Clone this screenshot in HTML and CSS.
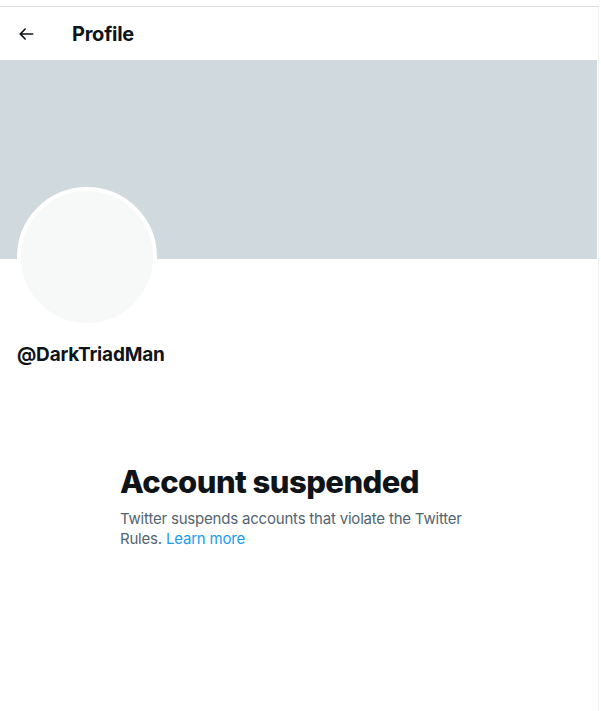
FILE: index.html
```html
<!DOCTYPE html>
<html lang="en">
<head>
<meta charset="utf-8">
<title>Profile</title>
<link rel="stylesheet" href="styles.css">
</head>
<body>
<div class="page">
  <main class="column">
    <header class="topbar">
      <span class="back">
        <svg viewBox="0 0 24 24" width="20" height="20" aria-hidden="true"><path d="M20 11H7.414l4.293-4.293c.39-.39.39-1.023 0-1.414s-1.023-.39-1.414 0l-6 6c-.39.39-.39 1.023 0 1.414l6 6c.195.195.45.293.707.293s.512-.098.707-.293c.39-.39.39-1.023 0-1.414L7.414 13H20c.553 0 1-.447 1-1s-.447-1-1-1z"/></svg>
      </span>
      <h1 class="title">Profile</h1>
    </header>
    <div class="banner"></div>
    <div class="profile">
      <div class="avatar"></div>
      <div class="handle">@DarkTriadMan</div>
    </div>
    <section class="empty">
      <h2 class="empty-title">Account suspended</h2>
      <p class="empty-text"><span>Twitter suspends accounts that violate the Twitter Rules.</span> <a href="#" class="link">Learn more</a></p>
    </section>
  </main>
</div>
</body>
</html>
```

FILE: styles.css
```css
* { box-sizing: border-box; }
html, body { margin: 0; padding: 0; background: #fff; }
body {
  font-family: Inter, "Noto Sans", "Liberation Sans", sans-serif;
  color: #0f1419;
}
.page {
  padding-top: 6px;
}
.column {
  width: 599px;
  min-height: 705px;
  border-top: 1px solid #dcdfe1;
  border-right: 1px solid #eff3f4;
}
.topbar {
  height: 53px;
  display: flex;
  align-items: center;
  padding-left: 16px;
}
.back {
  width: 20px;
  height: 20px;
  display: flex;
}
.back svg { fill: #0f1419; }
.title {
  margin: 0 0 0 36px;
  font-size: 20px;
  font-weight: 700;
  line-height: 24px;
  letter-spacing: -0.25px;
}
.banner {
  height: 199px;
  background: #cfd9de;
  margin-right: 1px;
}
.profile {
  padding-left: 17px;
}
.avatar {
  width: 140px;
  height: 140px;
  margin-top: -72px;
  border-radius: 50%;
  border: 4px solid #fff;
  background: #f7f9f9;
}
.handle {
  margin-top: 16px;
  font-size: 19px;
  font-weight: 700;
  line-height: 24px;
  letter-spacing: -0.2px;
}
.empty {
  width: 358px;
  margin: 97px auto 0;
}
.empty-title {
  margin: 0;
  font-size: 31px;
  font-weight: 800;
  line-height: 36px;
  letter-spacing: -0.55px;
}
.empty-text {
  margin: 9px 0 0;
  font-size: 15px;
  line-height: 20px;
  letter-spacing: -0.2px;
  color: #536471;
}
.link {
  color: #1d9bf0;
  text-decoration: none;
}
```
